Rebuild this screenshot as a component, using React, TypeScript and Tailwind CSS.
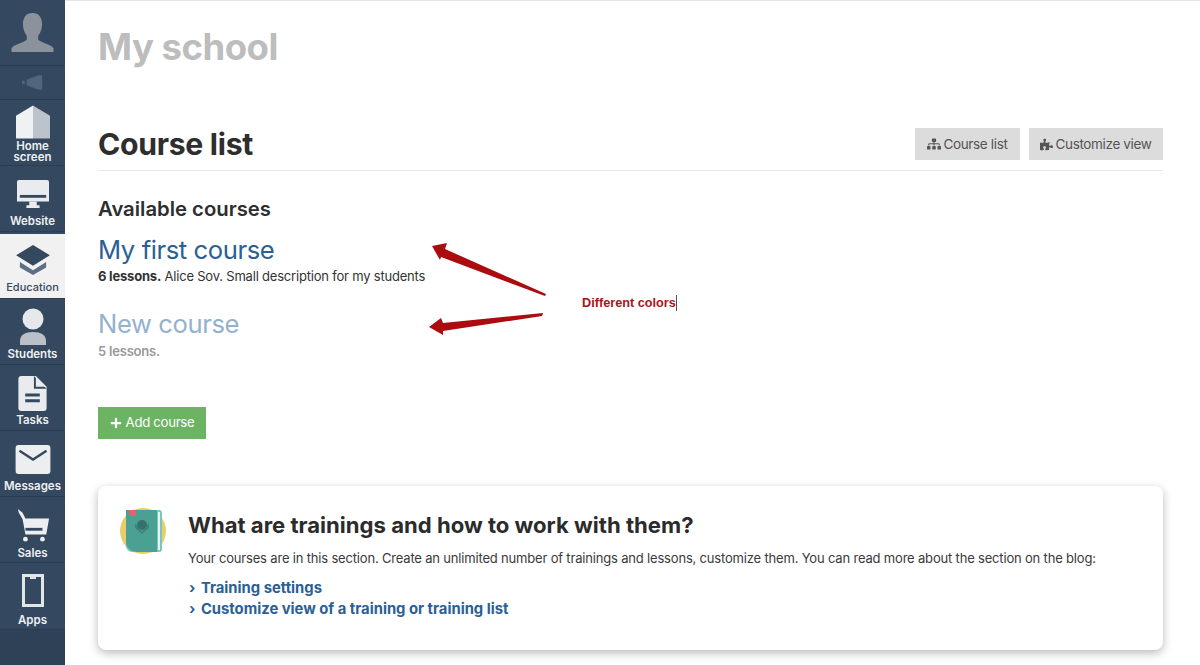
import type { ReactNode } from "react";
import { FaPlus, FaPuzzlePiece, FaSitemap } from "react-icons/fa";

function NavItem({
  label,
  icon,
  active,
  h = "h-[66px]",
  pt = "pt-[11px]",
  pb = "pb-[4px]",
}: {
  label: ReactNode;
  icon: ReactNode;
  active?: boolean;
  h?: string;
  pt?: string;
  pb?: string;
}) {
  return (
    <div
      className={`flex ${h} ${pt} ${pb} flex-col items-center border-b border-[#2b3d50] text-center leading-[11px] ${
        active ? "bg-[#f1f1f1] text-[11px] font-medium text-[#34495f]" : "text-[11.5px] font-semibold text-[#eef0f2]"
      }`}
    >
      {icon}
      <span className="mt-auto">{label}</span>
    </div>
  );
}

function Sidebar() {
  return (
    <aside className="flex h-[665px] w-[65px] shrink-0 flex-col bg-[#34495f] font-['Inter',sans-serif]">
      <div className="flex h-[66px] items-start justify-center border-b border-[#2b3d50] pt-[12px]">
        <svg width="43" height="42" viewBox="0 0 44 44">
          <path d="M22 1c7 0 10 5 10 12 0 5-2 9-4 12v4c3 3 14 5 16 9v4H0v-4c2-4 13-6 16-9v-4c-2-3-4-7-4-12 0-7 3-12 10-12z" fill="#8b929b" />
        </svg>
      </div>
      <div className="flex h-[34px] items-center justify-center border-b border-[#2b3d50]">
        <svg width="22" height="15" viewBox="0 0 24 16">
          <path d="M0 6h3v4H0zM5 5l13-5h4v16h-4L5 11z" fill="#52667b" />
        </svg>
      </div>
      <NavItem
        label={<>Home<br />screen</>}
        pt="pt-[5px]"
        pb="pb-[2px]"
        icon={
          <svg width="34" height="34" viewBox="0 0 36 35">
            <path d="M18 0L0 11v24h18z" fill="#f0f1f3" />
            <path d="M18 0l18 11v24H18z" fill="#bcc3cb" />
          </svg>
        }
      />
      <NavItem
        label="Website"
        pt="pt-[13px]"
        icon={
          <svg width="32" height="30" viewBox="0 0 34 30">
            <path d="M2 0h30a2 2 0 0 1 2 2v21H0V2a2 2 0 0 1 2-2z" fill="#e9ebee" />
            <path d="M3 16h28v3H3z" fill="#34495f" />
            <path d="M13 23h8v4h3v3H10v-3h3z" fill="#e9ebee" />
          </svg>
        }
      />
      <div className="h-[2px]" />
      <NavItem
        active
        label="Education"
        h="h-[65px]"
        pb="pb-[5px]"
        icon={
          <svg width="36" height="30" viewBox="0 0 36 32">
            <path d="M18 0l18 11-18 11L0 11z" fill="#34495f" />
            <path d="M4 18l14 9 14-9v6l-14 8-14-8z" fill="#5c6f84" />
          </svg>
        }
      />
      <NavItem
        label="Students"
        pt="pt-[9px]"
        icon={
          <svg width="28" height="37" viewBox="0 0 28 37">
            <circle cx="14" cy="11" r="10.5" fill="#e6e8eb" />
            <path d="M1 37v-4c0-6 5-9 13-9s13 3 13 9v4z" fill="#b9c0c8" />
          </svg>
        }
      />
      <NavItem
        label="Tasks"
        icon={
          <svg width="29" height="35" viewBox="0 0 29 36">
            <path d="M3 0h15l11 11v22a3 3 0 0 1-3 3H3a3 3 0 0 1-3-3V3a3 3 0 0 1 3-3z" fill="#e9ebee" />
            <path d="M16 0l13 13H16z" fill="#34495f" />
            <path d="M18 1l10 10H18z" fill="#e9ebee" />
            <path d="M7 18h15v3H7zM7 24h15v3H7z" fill="#34495f" />
          </svg>
        }
      />
      <NavItem
        label="Messages"
        pt="pt-[14px]"
        icon={
          <svg width="36" height="29" viewBox="0 0 36 30">
            <rect width="36" height="30" rx="3" fill="#eceef0" />
            <path d="M4 6l14 9 14-9" fill="none" stroke="#34495f" strokeWidth="2.5" />
          </svg>
        }
      />
      <NavItem
        label="Sales"
        pb="pb-[3px]"
        icon={
          <svg width="34" height="35" viewBox="0 0 34 37">
            <path d="M1 1l5 4 3 6h25l-3 17H9L6 12 2 5z" fill="#eceef0" />
            <path d="M9 21h18v3H9z" fill="#34495f" />
            <circle cx="9" cy="33" r="2.5" fill="#eceef0" />
            <circle cx="27" cy="33" r="2.5" fill="#eceef0" />
          </svg>
        }
      />
      <NavItem
        label="Apps"
        h="h-[67px]"
        pb="pb-[3px]"
        icon={
          <svg width="22" height="33" viewBox="0 0 22 33">
            <path d="M1.5 1.5h19v30h-19z" fill="none" stroke="#e3e6e9" strokeWidth="3" />
            <path d="M8 2h6v3H8z" fill="#e3e6e9" />
          </svg>
        }
      />
      <div className="flex-1 bg-[#2f4156]" />
    </aside>
  );
}

function Main() {
  return (
    <main className="relative flex-1 border-t border-[#e6e6e6] pl-[33px] pr-[37px] font-['Inter',sans-serif]">
      <h1 className="mt-[23px] text-[36.5px] font-bold leading-[46px] tracking-[-0.5px] text-[#bdbdbd]">My school</h1>
      <div className="mt-[51px] flex h-[50px] items-start justify-between border-b border-[#e8e8e8]">
        <h2 className="pt-[3px] text-[30.2px] font-bold leading-[40px] tracking-[-0.3px] text-[#2e2e2e]">Course list</h2>
        <div className="mt-[7px] flex gap-[9px] text-[13.5px] leading-[32px] tracking-[-0.35px] text-[#555]">
          <span className="flex h-[32px] w-[105px] items-center justify-center gap-[2px] bg-[#dcdcdc]">
            <FaSitemap size={14} />
            Course list
          </span>
          <span className="flex h-[32px] w-[134px] items-center justify-center gap-[2px] bg-[#dcdcdc]">
            <FaPuzzlePiece size={13} />
            Customize view
          </span>
        </div>
      </div>
      <h3 className="mt-[24px] text-[20.3px] font-semibold leading-[28px] text-[#2e2e2e]">Available courses</h3>
      <p className="mt-[10px] text-[25.6px] leading-[34px] tracking-[-0.4px] text-[#2a6094]">My first course</p>
      <p className="mt-[-1px] text-[13px] leading-[20px] tracking-[-0.2px] text-[#333]">
        <b>6 lessons.</b> Alice Sov. Small description for my students
      </p>
      <p className="mt-[21px] text-[25.6px] leading-[34px] tracking-[-0.4px] text-[#94b2cf]">New course</p>
      <p className="text-[13px] font-semibold leading-[20px] tracking-[-0.2px] text-[#999]">5 lessons.</p>
      <button className="mt-[46px] flex h-[32px] w-[108px] items-center justify-center gap-[4px] bg-[#6cb463] text-[13.2px] tracking-[-0.3px] text-white">
        <FaPlus size={12} />
        Add course
      </button>
      <section className="mt-[47px] flex h-[164px] gap-[22px] rounded-lg bg-white pl-[22px] pt-[21px] shadow-[0_3px_10px_rgba(0,0,0,0.28)]">
        <svg width="46" height="46" viewBox="0 0 46 46" className="mt-[1px] shrink-0">
          <circle cx="23" cy="23" r="23" fill="#e9cd6b" />
          <path d="M6 2h33a3 3 0 0 1 3 3v36a3 3 0 0 1-3 3H12a6 6 0 0 1-6-6z" fill="#7cc5bc" />
          <path d="M6 2h30a1 1 0 0 1 1 1v41H18C11 44 6 40 6 34z" fill="#4aa193" />
          <path d="M38 4h2v38h-2z" fill="#e6f4f1" />
          <path d="M9 2h7v6H9z" fill="#e65f6e" />
          <circle cx="22" cy="17" r="5" fill="#35716a" />
          <path d="M15 15l7 9 7-9v5l-7 6-7-6z" fill="#3f8379" />
        </svg>
        <div>
          <h4 className="text-[22.1px] font-bold leading-[36px] text-[#2b2b2b]">What are trainings and how to work with them?</h4>
          <p className="mt-[5px] text-[13px] leading-[20px] tracking-[-0.18px] text-[#3a3a3a]">
            Your courses are in this section. Create an unlimited number of trainings and lessons, customize them. You can read more about the section on the blog:
          </p>
          <div className="mt-[10px] pl-[1px] text-[14.8px] font-bold leading-[20px] text-[#2a6094]">
            <p>
              <span className="mr-[2px]">›</span> Training settings
            </p>
            <p className="mt-[1px]">
              <span className="mr-[2px]">›</span> Customize view of a training or training list
            </p>
          </div>
        </div>
      </section>

      <svg width="130" height="110" viewBox="0 0 130 110" className="absolute left-[361px] top-[240px]">
        <path d="M6 5L21 2 19 8 120 53 119 55 15 16 14 19z" fill="#ab0c0f" />
        <path d="M3 86L15 77 17 82 117 72 116 75 17 90 17 94z" fill="#ab0c0f" />
      </svg>
      <div className="absolute left-[517px] top-[293px] flex items-center font-['Liberation_Sans',sans-serif] text-[12.7px] font-bold leading-[18px] text-[#a8141c]">
        Different colors<span className="h-[16px] w-px bg-[#555]" />
      </div>
    </main>
  );
}

export default function App() {
  return (
    <div className="flex h-[665px] w-[1200px] overflow-hidden bg-white">
      <Sidebar />
      <Main />
    </div>
  );
}
